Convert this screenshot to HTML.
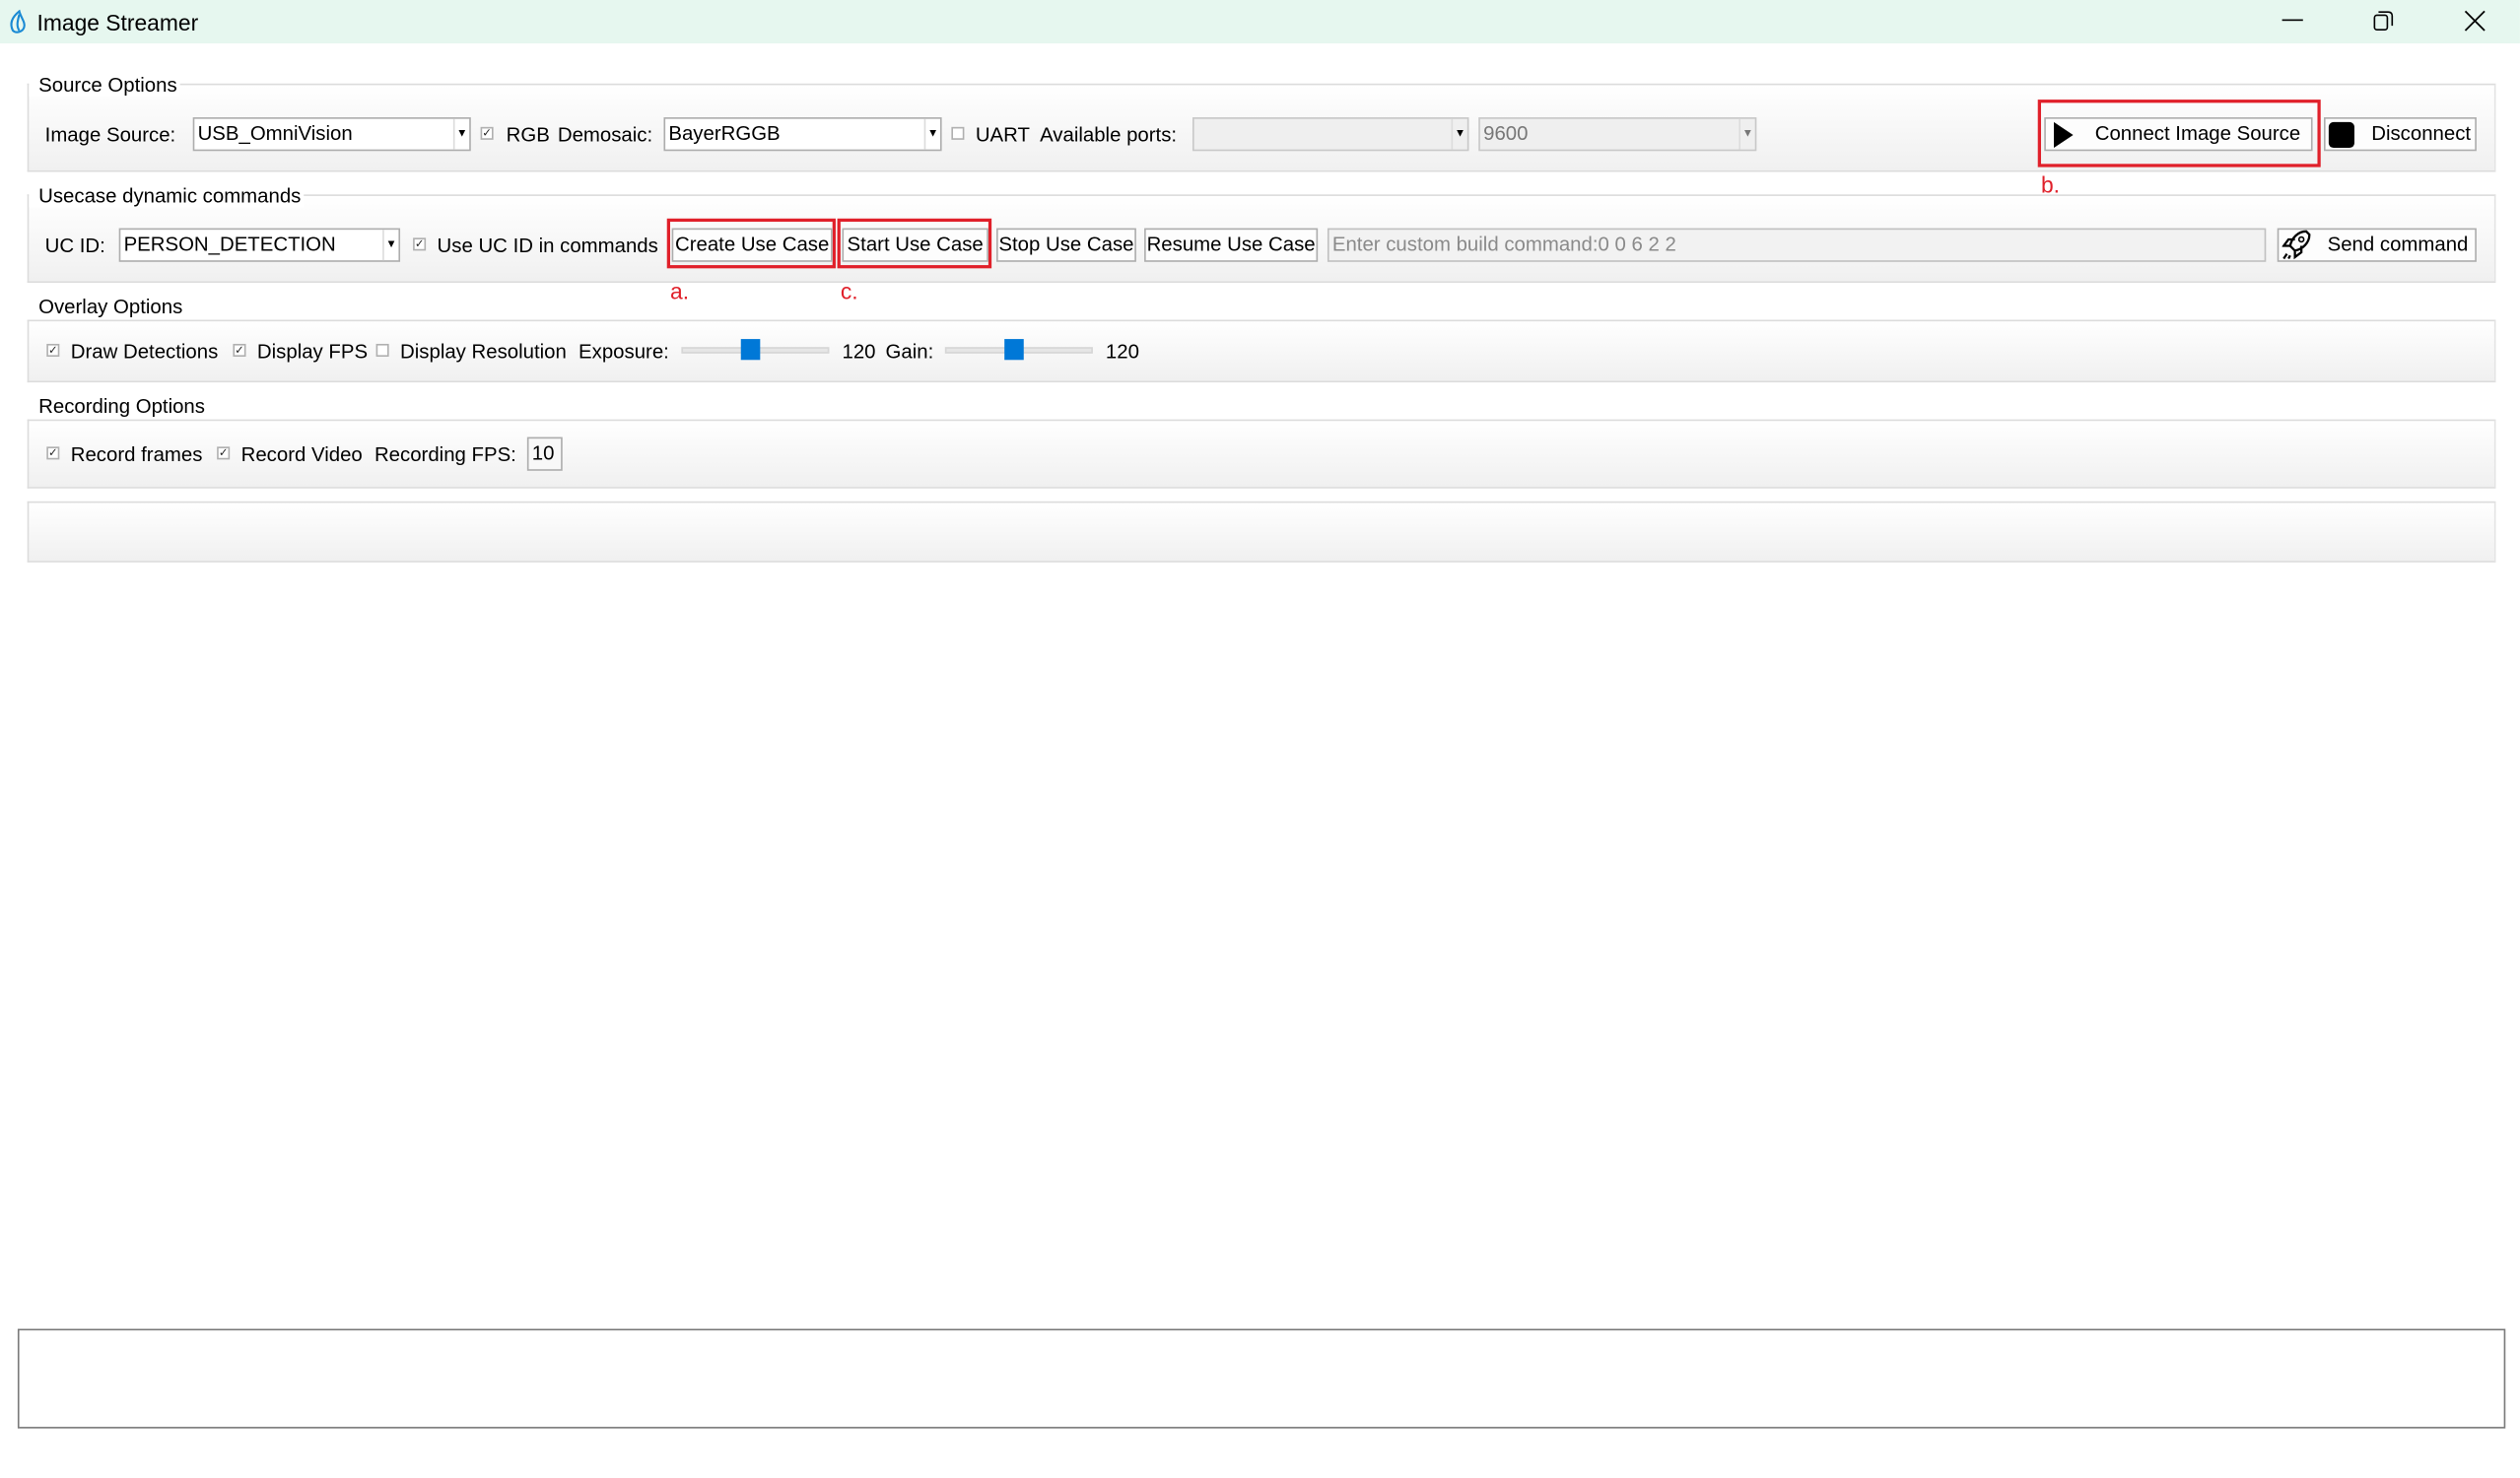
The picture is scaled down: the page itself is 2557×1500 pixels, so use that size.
<!DOCTYPE html>
<html><head><meta charset="utf-8"><style>
html,body{margin:0;padding:0;background:#fff;overflow:hidden}
body{width:2557px;height:1500px;position:relative}
#w{position:absolute;left:0;top:0;width:1568px;height:920px;transform:scale(1.6307);transform-origin:0 0;font-family:"Liberation Sans",sans-serif;font-size:12.5px;color:#000}
#w div,#w span{position:absolute;box-sizing:border-box}
.t{white-space:nowrap;line-height:14px}
.g{border:1px solid #dcdcdc;background:linear-gradient(#fff,#f0f0f0);border-right-color:#e4e4e4}
.gl{background:#fff;padding:0 2px 0 6px;line-height:14px}
.cb{border:1px solid #adadad;background:#fff;height:21px;line-height:19px;padding-left:2px}
.cb .ar{right:0;top:0;width:10px;height:19px;border-left:1px solid #dcdcdc;font-size:7px;text-align:center;line-height:19px}
.btn{border:1px solid #adadad;background:#fdfdfd;height:21px;line-height:19px;text-align:center;white-space:nowrap}
.ck{width:8px;height:8px;border:1px solid #b0b0b0;background:#fff;font-size:7px;line-height:7px;text-align:center;color:#222}
.rb{border:2px solid #e0202a}
.red{color:#e0202a;font-size:14px}
.sl{height:4px;background:#e6e6e6;border:1px solid #d6d6d6}
.hd{width:12px;height:13px;background:#0078d7}
</style></head><body><div id="w">
<div style="left:0;top:0;width:1568px;height:27px;background:#e6f7ef"></div>
<svg style="position:absolute;left:4px;top:6px" width="14" height="16" viewBox="0 0 14 16"><path d="M8 1 C3 5 2 9 4 13 C6 15 10 14 11 11 C12 8 9 5 8 1 Z M8 3 C7 7 6 10 8 13" fill="none" stroke="#1a8ad4" stroke-width="1.3"/></svg>
<div class="t" style="left:23px;top:7px;font-size:14px">Image Streamer</div>
<div style="left:1420px;top:12px;width:13px;height:1px;background:#000"></div>
<svg style="position:absolute;left:1476px;top:6px" width="14" height="14"><rect x="1.5" y="3.5" width="8" height="9" rx="1.5" fill="none" stroke="#000"/><path d="M4 1.5 H10 Q12.5 1.5 12.5 4 V10" fill="none" stroke="#000"/></svg>
<svg style="position:absolute;left:1533px;top:6px" width="14" height="14"><path d="M1 1 L13 13 M13 1 L1 13" stroke="#000" stroke-width="1.1"/></svg>

<div class="g" style="left:17px;top:52px;width:1536px;height:55px"></div>
<div class="t gl" style="left:18px;top:46px">Source Options</div>
<div class="t" style="left:28px;top:77px">Image Source:</div>
<div class="cb" style="left:120px;top:73px;width:173px">USB_OmniVision<span class="ar">▼</span></div>
<div class="ck" style="left:299px;top:79px">✓</div><div class="t" style="left:315px;top:77px">RGB</div>
<div class="t" style="left:347px;top:77px">Demosaic:</div>
<div class="cb" style="left:413px;top:73px;width:173px">BayerRGGB<span class="ar">▼</span></div>
<div class="ck" style="left:592px;top:79px"></div><div class="t" style="left:607px;top:77px">UART</div>
<div class="t" style="left:647px;top:77px">Available ports:</div>
<div class="cb" style="left:742px;top:73px;width:172px;background:#efefef;border-color:#c8c8c8"><span class="ar">▼</span></div>
<div class="cb" style="left:920px;top:73px;width:173px;background:#efefef;border-color:#c8c8c8;color:#777">9600<span class="ar">▼</span></div>
<div class="rb" style="left:1268px;top:62px;width:176px;height:42px"></div>
<div class="btn" style="left:1272px;top:73px;width:167px;padding-left:24px">Connect Image Source</div>
<svg style="position:absolute;left:1277px;top:76px" width="14" height="16"><path d="M1 0 L13 8 L1 16 Z" fill="#000"/></svg>
<div class="btn" style="left:1446px;top:73px;width:95px;padding-left:26px">Disconnect</div>
<div style="left:1449px;top:76px;width:16px;height:16px;background:#000;border-radius:3px"></div>
<div class="t red" style="left:1270px;top:108px">b.</div>

<div class="g" style="left:17px;top:121px;width:1536px;height:55px"></div>
<div class="t gl" style="left:18px;top:115px">Usecase dynamic commands</div>
<div class="t" style="left:28px;top:146px">UC ID:</div>
<div class="cb" style="left:74px;top:142px;width:175px">PERSON_DETECTION<span class="ar">▼</span></div>
<div class="ck" style="left:257px;top:148px">✓</div><div class="t" style="left:272px;top:146px">Use UC ID in commands</div>
<div class="rb" style="left:415px;top:136px;width:105px;height:31px"></div>
<div class="btn" style="left:418px;top:142px;width:100px">Create Use Case</div>
<div class="rb" style="left:521px;top:136px;width:96px;height:31px"></div>
<div class="btn" style="left:524px;top:142px;width:91px">Start Use Case</div>
<div class="btn" style="left:620px;top:142px;width:87px">Stop Use Case</div>
<div class="btn" style="left:712px;top:142px;width:108px">Resume Use Case</div>
<div class="cb" style="left:826px;top:142px;width:584px;background:#f2f2f2;border-color:#c0c0c0;color:#8a8a8a">Enter custom build command:0 0 6 2 2</div>
<div class="btn" style="left:1417px;top:142px;width:124px;padding-left:26px">Send command</div>
<svg style="position:absolute;left:1420px;top:143px" width="18" height="19" viewBox="0 0 18 19"><path d="M15 1 C10 1 6 5 5 10 L8 13 C13 12 17 8 17 3 Z M5 10 L1 10 L4 6 L8 6 M8 13 L8 17 L12 14 L12 10 M3 15 L1 18 M5 16 L4 18" fill="none" stroke="#000" stroke-width="1.4"/><circle cx="12" cy="6" r="1.5" fill="none" stroke="#000"/></svg>
<div class="t red" style="left:417px;top:174px">a.</div>
<div class="t red" style="left:523px;top:174px">c.</div>

<div class="g" style="left:17px;top:199px;width:1536px;height:39px"></div>
<div class="t gl" style="left:18px;top:184px">Overlay Options</div>
<div class="ck" style="left:29px;top:214px">✓</div><div class="t" style="left:44px;top:212px">Draw Detections</div>
<div class="ck" style="left:145px;top:214px">✓</div><div class="t" style="left:160px;top:212px">Display FPS</div>
<div class="ck" style="left:234px;top:214px"></div><div class="t" style="left:249px;top:212px">Display Resolution</div>
<div class="t" style="left:360px;top:212px">Exposure:</div>
<div class="sl" style="left:424px;top:216px;width:92px"></div><div class="hd" style="left:461px;top:211px"></div>
<div class="t" style="left:524px;top:212px">120</div>
<div class="t" style="left:551px;top:212px">Gain:</div>
<div class="sl" style="left:588px;top:216px;width:92px"></div><div class="hd" style="left:625px;top:211px"></div>
<div class="t" style="left:688px;top:212px">120</div>

<div class="g" style="left:17px;top:261px;width:1536px;height:43px"></div>
<div class="t gl" style="left:18px;top:246px">Recording Options</div>
<div class="ck" style="left:29px;top:278px">✓</div><div class="t" style="left:44px;top:276px">Record frames</div>
<div class="ck" style="left:135px;top:278px">✓</div><div class="t" style="left:150px;top:276px">Record Video</div>
<div class="t" style="left:233px;top:276px">Recording FPS:</div>
<div class="cb" style="left:328px;top:272px;width:22px;background:#f8f8f8">10</div>

<div class="g" style="left:17px;top:312px;width:1536px;height:38px"></div>
<div style="left:11px;top:827px;width:1548px;height:62px;border:1px solid #7a7a7a;background:#fff"></div>
</div></body></html>
